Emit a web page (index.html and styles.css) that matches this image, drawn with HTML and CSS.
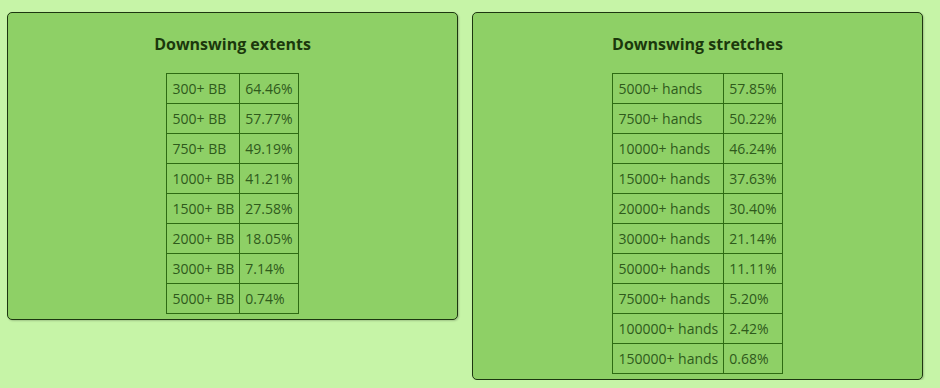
FILE: index.html
```html
<!DOCTYPE html>
<html>
<head>
<meta charset="utf-8">
<link rel="stylesheet" href="styles.css">
</head>
<body>
<div class="wrap">
  <section class="card">
    <h2 class="title">Downswing extents</h2>
    <table class="stats">
      <tr><td>300+ BB</td><td>64.46%</td></tr>
      <tr><td>500+ BB</td><td>57.77%</td></tr>
      <tr><td>750+ BB</td><td>49.19%</td></tr>
      <tr><td>1000+ BB</td><td>41.21%</td></tr>
      <tr><td>1500+ BB</td><td>27.58%</td></tr>
      <tr><td>2000+ BB</td><td>18.05%</td></tr>
      <tr><td>3000+ BB</td><td>7.14%</td></tr>
      <tr><td>5000+ BB</td><td>0.74%</td></tr>
    </table>
  </section>
  <section class="card">
    <h2 class="title">Downswing stretches</h2>
    <table class="stats">
      <tr><td>5000+ hands</td><td>57.85%</td></tr>
      <tr><td>7500+ hands</td><td>50.22%</td></tr>
      <tr><td>10000+ hands</td><td>46.24%</td></tr>
      <tr><td>15000+ hands</td><td>37.63%</td></tr>
      <tr><td>20000+ hands</td><td>30.40%</td></tr>
      <tr><td>30000+ hands</td><td>21.14%</td></tr>
      <tr><td>50000+ hands</td><td>11.11%</td></tr>
      <tr><td>75000+ hands</td><td>5.20%</td></tr>
      <tr><td>100000+ hands</td><td>2.42%</td></tr>
      <tr><td>150000+ hands</td><td>0.68%</td></tr>
    </table>
  </section>
</div>
</body>
</html>
```
FILE: styles.css
```css
html, body {
  margin: 0;
  padding: 0;
  background: #c6f4a7;
  font-family: "Open Sans", "DejaVu Sans", sans-serif;
}
.wrap {
  display: flex;
  align-items: flex-start;
  gap: 14px;
  padding: 12px 0 0 7px;
}
.card {
  width: 449px;
  background: #8ed066;
  border: 1px solid #1d3610;
  border-radius: 5px;
  box-shadow: 1px 1px 2px rgba(0, 0, 0, 0.2);
  padding: 20px 0 5px;
  box-sizing: content-box;
}
.title {
  margin: 0 0 18px;
  text-align: center;
  font-size: 16px;
  font-weight: 700;
  line-height: 22px;
  color: #1b380c;
}
.stats {
  margin: 0 auto;
  border-collapse: collapse;
  font-size: 14px;
  color: #2f5a1c;
}
.stats td {
  border: 1px solid #2e6b13;
  padding: 5px;
  line-height: 19px;
  white-space: nowrap;
}
```
